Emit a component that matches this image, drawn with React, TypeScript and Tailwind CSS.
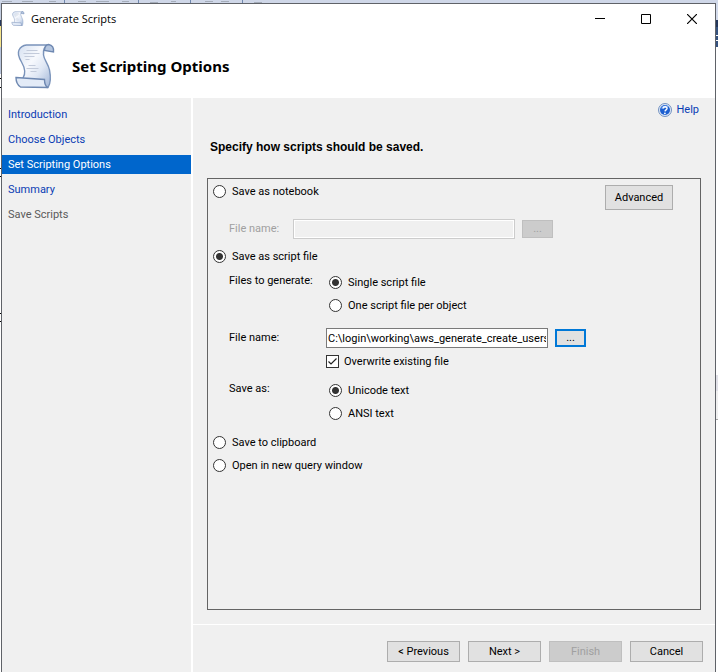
import { useState } from "react";
import type { ReactNode } from "react";

const steps = [
    { label: "Introduction", state: "done" },
    { label: "Choose Objects", state: "done" },
    { label: "Set Scripting Options", state: "current" },
    { label: "Summary", state: "done" },
    { label: "Save Scripts", state: "pending" },
];

const stepStyles: Record<string, string> = {
    done: "text-[#0a3cb4]",
    current: "bg-[#0066cc] text-white",
    pending: "text-[#5a5a5a]",
};

function ScrollIcon({ className, id }: { className: string; id: string }) {
    return (
        <svg viewBox="0 0 41 46" className={className} aria-hidden="true">
            <defs>
                <linearGradient id={id} x1="0" y1="0" x2="1" y2="1">
                    <stop offset="0" stopColor="#d5e0f1" />
                    <stop offset="0.4" stopColor="#f7f9fd" />
                    <stop offset="0.65" stopColor="#dfe7f4" />
                    <stop offset="1" stopColor="#9fb4d6" />
                </linearGradient>
            </defs>
            <path
                d="M12 2H35C30 3 28.500 7 29 12C29.500 17 34 21 35 27C36 32 36.500 40 33.500 44.500L8 42L8.500 35C11 31 10.500 25 7 19C4 14 3 10 4.500 7C6 4 8 2.500 12 2Z"
                fill={`url(#${id})`}
                stroke="#7a93ba"
                strokeWidth="1.400"
            />
            <path d="M34 1.500C38 2 39.500 5 39 9L30 7.500C30 4 31 2 34 1.500Z" fill="#b4c5df" stroke="#6e88b1" strokeWidth="1.400" />
            <path d="M1.500 34.500L30 36.500C30 40 31 43.500 33.500 44.500L6 44C3 42 1.500 38 1.500 34.500Z" fill="#e3ebf7" stroke="#6e88b1" strokeWidth="1.400" />
            <path d="M12 7.500H23M9 10.500H25M10 13.500H20M11 16.500H15M14 22.500H21M12 25.500H24M16 28.500H22" stroke="#c3cbdb" />
        </svg>
    );
}

function HelpIcon() {
    return (
        <svg viewBox="0 0 14 14" className="size-[14px]" aria-hidden="true">
            <circle cx="7" cy="7" r="6.500" fill="#dce7f7" stroke="#7391c0" />
            <circle cx="7" cy="7" r="5" fill="#1d5fd0" />
            <path d="M3 5.500C4 2.500 8 1.500 10.500 3.500C9 5 6 5.500 3 5.500Z" fill="#6f9fee" />
            <path d="M5 5.500C5.200 3.200 9.300 3.300 9 5.500C8.800 6.900 7.200 6.800 7 8.300" fill="none" stroke="#fff" strokeWidth="1.500" />
            <circle cx="6.900" cy="10.300" r="0.900" fill="#fff" />
        </svg>
    );
}

type RadioProps = {
    name: string;
    label: string;
    checked: boolean;
    onChange: () => void;
    className?: string;
};

function Radio({ name, label, checked, onChange, className = "" }: RadioProps) {
    return (
        <label className={`flex h-[23px] items-center gap-1.5 ${className}`}>
            <input
                type="radio"
                name={name}
                checked={checked}
                onChange={onChange}
                className="size-[13px] shrink-0 appearance-none rounded-full border border-[#333] bg-white checked:bg-[radial-gradient(circle,#333_0_3px,white_4px)]"
            />
            {label}
        </label>
    );
}

function Button({ children, className = "", disabled = false }: { children: ReactNode; className?: string; disabled?: boolean }) {
    return (
        <button
            type="button"
            disabled={disabled}
            className={`flex items-center justify-center border border-[#adadad] bg-[#e1e1e1] disabled:border-[#bfbfbf] disabled:bg-[#cccccc] disabled:text-[#a0a0a0] ${className}`}
        >
            {children}
        </button>
    );
}

/* Slivers of the editor that show around the dialog */
function EditorTop() {
    return (
        <div className="h-[3px] bg-[#cfd7e8]" aria-hidden="true">
            <svg width="300" height="3" className="block">
                <path d="M2 1.500H12M22 1.500H33M49 1.500H56M78 1.500H86M96 1.500H109M122 1.500H129M150 2.500H158M171 1.500H176M205 1.500H213M221 1.500H229M254 2.500H262" stroke="#a5adba" strokeWidth="1" />
                <path d="M64.500 0V3M138.500 0V3M190.500 0V3M242.500 0V3" stroke="#6f87ad" />
            </svg>
        </div>
    );
}

function EditorLeft() {
    return (
        <div className="w-px bg-white" aria-hidden="true">
            <div className="h-[17px] bg-[#c3cde0]" />
            <div className="h-[6px] bg-[#24375c]" />
            <div className="h-[21px] bg-[#f7e68b]" />
            <div className="h-[27px] bg-[#b9c5dc]" />
            <div className="mt-1 h-[10px] border-y border-black" />
            <div className="mt-20 h-[9px] border-y border-black" />
            <div className="mt-34 h-[9px] border-y border-black" />
        </div>
    );
}

function EditorRight() {
    return (
        <div className="w-[2px] bg-white" aria-hidden="true">
            <div className="h-[17px] bg-[#d3dbec]" />
            <div className="h-[7px] bg-[#24375c]" />
            <div className="h-[8px] bg-[#35527f]" />
            <div className="mt-px h-[4px] bg-[#35527f]" />
            <div className="mt-px h-[6px] bg-[#35527f]" />
            <div className="mt-82 h-[16px] bg-[#e1e1e8]" />
            <div className="h-[29px] border-b border-[#a5a5a5] bg-[#f0f0f0]" />
        </div>
    );
}

export default function App() {
    const [target, setTarget] = useState("file");
    const [split, setSplit] = useState("single");
    const [encoding, setEncoding] = useState("unicode");
    const [overwrite, setOverwrite] = useState(true);
    const [fileName, setFileName] = useState("C:\\login\\working\\aws_generate_create_users");

    return (
        <div className="flex min-h-screen flex-col font-['Roboto',sans-serif] text-[11px] leading-4 text-black">
            <EditorTop />
            <div className="flex grow">
                <EditorLeft />
                <div className="flex min-w-0 grow flex-col border-x border-t border-[#5f6268] bg-white">
                    <div className="flex h-[29px] shrink-0 items-center pl-2">
                        <ScrollIcon className="h-[15px] w-4" id="scroll-small" />
                        <h1 className="grow pl-[5px] font-['Open_Sans',sans-serif]">Generate Scripts</h1>
                        <button type="button" aria-label="Minimize" className="flex h-full w-[46px] items-center justify-center">
                            <svg width="10" height="10"><path d="M0 4.500H10" stroke="#000" /></svg>
                        </button>
                        <button type="button" aria-label="Maximize" className="flex h-full w-[46px] items-center justify-center">
                            <svg width="10" height="10"><path d="M.5.5H9.500V9.500H.5Z" fill="none" stroke="#000" /></svg>
                        </button>
                        <button type="button" aria-label="Close" className="flex h-full w-[46px] items-center justify-center">
                            <svg width="10" height="10"><path d="M0 0L10 10M10 0L0 10" stroke="#000" strokeWidth="1.200" /></svg>
                        </button>
                    </div>

                    <header className="flex h-[65px] shrink-0 items-center gap-4 pl-3">
                        <ScrollIcon className="h-[46px] w-[42px]" id="scroll-large" />
                        <h2 className="font-['Noto_Sans',sans-serif] text-[15px] font-bold">Set Scripting Options</h2>
                    </header>

                    <div className="flex grow gap-[2px]">
                        <nav className="flex w-[189px] shrink-0 flex-col gap-1.5 bg-[#f0f0f0] pt-[7px]">
                            {steps.map((step) => (
                                <a key={step.label} href="#" className={`h-[19px] pl-1.5 leading-[19px] ${stepStyles[step.state]}`}>
                                    {step.label}
                                </a>
                            ))}
                        </nav>

                        <div className="flex min-w-0 grow flex-col">
                            <main className="flex grow flex-col bg-[#f0f0f0] px-3.5 pb-3.5">
                                <a href="#" className="flex h-6 items-center gap-1 self-end pr-0.5 text-[#0a3cb4]">
                                    <HelpIcon />
                                    Help
                                </a>
                                <h3 className="mt-[13px] h-6 pl-[3px] font-['Liberation_Sans',sans-serif] text-[12px] leading-6 font-bold">
                                    Specify how scripts should be saved.
                                </h3>

                                <form className="mt-[19px] grow border border-[#646464] pl-[5px]">
                                    <div className="flex items-start justify-between pr-[27px]">
                                        <Radio className="mt-px" name="target" label="Save as notebook" checked={target === "notebook"} onChange={() => setTarget("notebook")} />
                                        <Button className="mt-1.5 h-[25px] w-[68px]">Advanced</Button>
                                    </div>
                                    <div className="mt-[9px] flex items-center pl-4">
                                        <label htmlFor="notebook-file" className="w-16 text-[#a0a0a0]">File name:</label>
                                        <input id="notebook-file" disabled className="h-5 w-[222px] border border-[#cccccc] bg-[#f0f0f0] shadow-[inset_0_0_0_1px_white]" />
                                        <Button disabled className="ml-[7px] h-[18px] w-[31px]">...</Button>
                                    </div>

                                    <Radio className="mt-1.5" name="target" label="Save as script file" checked={target === "file"} onChange={() => setTarget("file")} />

                                    <div role="radiogroup" aria-labelledby="split-label" className="mt-[3px] flex pl-4">
                                        <span id="split-label" className="w-[100px] leading-[19px]">Files to generate:</span>
                                        <div>
                                            <Radio name="split" label="Single script file" checked={split === "single"} onChange={() => setSplit("single")} />
                                            <Radio name="split" label="One script file per object" checked={split === "multiple"} onChange={() => setSplit("multiple")} />
                                        </div>
                                    </div>

                                    <div className="mt-[11px] flex items-center pl-4">
                                        <label htmlFor="script-file" className="w-[97px]">File name:</label>
                                        <input
                                            id="script-file"
                                            value={fileName}
                                            onChange={(e) => setFileName(e.target.value)}
                                            className="h-5 w-[222px] border border-[#7a7a7a] bg-white px-px"
                                        />
                                        <button type="button" className="ml-[7px] flex h-[18px] w-[31px] items-center justify-center border-2 border-[#0078d7] bg-[#e1e1e1]">
                                            ...
                                        </button>
                                    </div>
                                    <label className="mt-0.5 ml-[113px] flex h-[23px] items-center gap-[5px]">
                                        <span className="grid size-[13px]">
                                            <input
                                                type="checkbox"
                                                checked={overwrite}
                                                onChange={(e) => setOverwrite(e.target.checked)}
                                                className="peer col-start-1 row-start-1 size-[13px] appearance-none border border-[#333] bg-white"
                                            />
                                            <svg viewBox="0 0 13 13" className="pointer-events-none invisible col-start-1 row-start-1 size-[13px] peer-checked:visible">
                                                <path d="M2.500 6.500L5 9L10.500 3.500" fill="none" stroke="#222" strokeWidth="1.200" />
                                            </svg>
                                        </span>
                                        Overwrite existing file
                                    </label>

                                    <div role="radiogroup" aria-labelledby="encoding-label" className="mt-1.5 flex pl-4">
                                        <span id="encoding-label" className="w-[100px] leading-[19px]">Save as:</span>
                                        <div>
                                            <Radio name="encoding" label="Unicode text" checked={encoding === "unicode"} onChange={() => setEncoding("unicode")} />
                                            <Radio name="encoding" label="ANSI text" checked={encoding === "ansi"} onChange={() => setEncoding("ansi")} />
                                        </div>
                                    </div>

                                    <Radio className="mt-1.5" name="target" label="Save to clipboard" checked={target === "clipboard"} onChange={() => setTarget("clipboard")} />
                                    <Radio name="target" label="Open in new query window" checked={target === "query"} onChange={() => setTarget("query")} />
                                </form>
                            </main>

                            <footer className="mt-px flex justify-end gap-2 bg-[#f0f0f0] pt-4 pr-3 pb-2.5">
                                <Button className="h-[21px] w-[73px]">&lt; Previous</Button>
                                <Button className="h-[21px] w-[73px]">Next &gt;</Button>
                                <Button className="h-[21px] w-[73px]" disabled>Finish</Button>
                                <Button className="h-[21px] w-[73px]">Cancel</Button>
                            </footer>
                        </div>
                    </div>
                </div>
                <EditorRight />
            </div>
        </div>
    );
}
